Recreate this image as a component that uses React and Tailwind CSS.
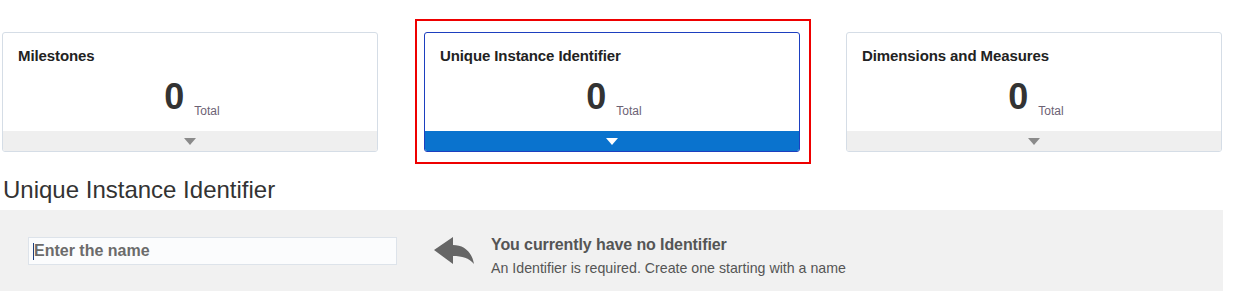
import React from "react";

function Tri({ color }) {
  return (
    <svg width="12" height="7" viewBox="0 0 12 7">
      <path d="M0 0 L12 0 L6 7 Z" fill={color} />
    </svg>
  );
}

function Card({ title, active }) {
  return (
    <div
      className={
        "w-[376px] h-[120px] flex flex-col rounded-[3px] border bg-white overflow-hidden " +
        (active ? "border-[#1d3fbf]" : "border-[#d5dde6]")
      }
    >
      <div className="flex-1 flex flex-col pl-[15px] pt-[14px]">
        <div className="text-[15px] leading-[18px] font-bold text-[#222] tracking-[-0.1px]">{title}</div>
        <div className="mt-[14px] flex items-end justify-center pl-[4px] pr-[15px]">
          <span className="text-[36px] leading-[36px] font-bold text-[#333]">0</span>
          <span className="ml-[10px] -mb-[2px] text-[12px] leading-[12px] text-[#6c6274]">Total</span>
        </div>
      </div>
      <div
        className={
          "h-[20px] flex items-center justify-center " +
          (active ? "bg-[#0a73ce]" : "bg-[#efefef]")
        }
      >
        <Tri color={active ? "#ffffff" : "#8a8a8a"} />
      </div>
    </div>
  );
}

export default function App() {
  return (
    <div
      className="w-[1240px] h-[300px] bg-white overflow-hidden"
      style={{ fontFamily: '"Liberation Sans", Arial, sans-serif' }}
    >
      <div className="flex gap-[46px] pl-[2px] pt-[32px]">
        <Card title="Milestones" />
        <div className="relative">
          <Card title="Unique Instance Identifier" active />
          <div className="absolute left-[-9px] top-[-13px] w-[396px] h-[145px] border-2 border-[#ee0000] pointer-events-none" />
        </div>
        <Card title="Dimensions and Measures" />
      </div>
      <div className="mt-[24px] mb-[6px] pl-[3px] text-[24px] leading-[28px] text-[#333]">
        Unique Instance Identifier
      </div>
      <div className="w-[1223px] h-[81px] bg-[#f1f1f1] flex items-start pt-[27px] pl-[28px]">
        <div className="relative">
          <input
            className="block w-[369px] h-[28px] border border-[#dde3ea] bg-[#fbfcfd] pl-[5px] pr-[5px] text-[16px] font-bold text-[#333] placeholder:text-[#6b6b6b] outline-none"
            placeholder="Enter the name"
          />
          <span className="absolute left-[5px] top-[6px] w-[1px] h-[17px] bg-[#1d3f7f]" />
        </div>
        <div className="ml-[37px] -mt-[1px] flex items-start gap-[16px]">
          <svg width="41" height="30" viewBox="0 0 41 30" className="shrink-0">
            <path
              d="M0 14 L19 1 L19 9 C30 9 38 16 40 28 C35 22 28 20 19 20 L19 28 Z"
              fill="#666"
            />
          </svg>
          <div className="flex flex-col">
            <div className="text-[16px] leading-[18px] font-bold text-[#555] tracking-[-0.1px]">
              You currently have no Identifier
            </div>
            <div className="mt-[6px] text-[14.2px] leading-[16px] text-[#555]">
              An Identifier is required. Create one starting with a name
            </div>
          </div>
        </div>
      </div>
    </div>
  );
}
